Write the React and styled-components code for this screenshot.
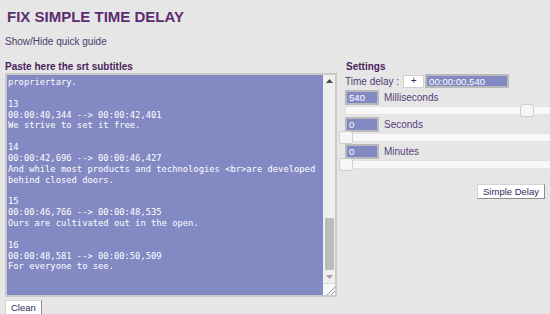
import React, { useState } from 'react';
import styled, { createGlobalStyle } from 'styled-components';

const GlobalStyle = createGlobalStyle`
  html, body {
    margin: 0;
    padding: 0;
  }
  body {
    background: #e6e6e6;
    font-family: "Liberation Sans", Arial, sans-serif;
    overflow: hidden;
  }
`;

const Page = styled.div`
  width: 550px;
  height: 314px;
  overflow: hidden;
  padding: 8px 0 0 5px;
  box-sizing: border-box;
`;

const Title = styled.h1`
  margin: 0 0 0 2px;
  font-size: 15px;
  line-height: 17px;
  font-weight: bold;
  color: #5c2d71;
`;

const GuideLink = styled.a`
  display: block;
  margin-top: 11px;
  font-size: 10px;
  line-height: 12px;
  color: #4d3a6b;
  text-decoration: none;
  cursor: pointer;
`;

const Columns = styled.div`
  display: flex;
  gap: 8px;
  margin-top: 13px;
`;

const LeftCol = styled.div`
  width: 332px;
  flex-shrink: 0;
`;

const RightCol = styled.div`
  width: 205px;
  flex-shrink: 0;
`;

const SectionLabel = styled.div`
  font-size: 10px;
  line-height: 12px;
  font-weight: bold;
  color: #4b1f5e;
  padding-left: ${({ $indent }) => $indent || 0}px;
`;

const Frame = styled.div`
  display: flex;
  width: 332px;
  height: 224px;
  box-sizing: border-box;
  border: 2px solid #c9c9c9;
`;

const SrtText = styled.textarea`
  flex: 1;
  margin: 0;
  border: none;
  outline: none;
  resize: none;
  overflow: hidden;
  padding: 2px 0 0 1px;
  background: #8389c3;
  color: #ffffff;
  font-family: "DejaVu Sans Mono", "Liberation Mono", monospace;
  font-size: 8.8px;
  line-height: 10.85px;
  white-space: pre;
`;

const ScrollBar = styled.div`
  width: 12px;
  display: flex;
  flex-direction: column;
  background: #efefef;
`;

const ScrollArrow = styled.div`
  height: 12px;
  display: flex;
  align-items: center;
  justify-content: center;
`;

const ScrollTrack = styled.div`
  flex: 1;
`;

const ScrollThumb = styled.div`
  margin: 131px 1px 0 2px;
  height: 52px;
  background: #bcbcbc;
`;

const ResizeGrip = styled.div`
  height: 12px;
  background: #f7f7f7;
  border-top: 1px solid #dcdcdc;
  box-sizing: border-box;
  display: flex;
  align-items: flex-end;
  justify-content: flex-end;
`;

const Button = styled.button`
  height: ${({ $h }) => $h}px;
  padding: 0 5px;
  margin: 0;
  background: #ffffff;
  border: 1px solid;
  border-color: #d4d4d4 #8c8c8c #8c8c8c #d4d4d4;
  font-family: "Liberation Sans", Arial, sans-serif;
  font-size: 9.5px;
  line-height: 1;
  color: #2f2a5c;
  cursor: pointer;
`;

const PlusButton = styled.button`
  width: 21px;
  height: 13px;
  padding: 0;
  margin: 0 1px 0 4px;
  background: #ffffff;
  border: 1px solid #d0d0d0;
  font-family: "Liberation Sans", Arial, sans-serif;
  font-size: 10px;
  line-height: 1;
  color: #2f2a5c;
`;

const TimeRow = styled.div`
  display: flex;
  align-items: center;
  height: 14px;
  margin-top: 1px;
  font-size: 10px;
  color: #4e3d73;
`;

const Field = styled.input`
  width: ${({ $w }) => $w}px;
  height: ${({ $h }) => $h}px;
  box-sizing: border-box;
  margin: 0;
  padding: 0 2px;
  background: #8389c3;
  color: #ffffff;
  border: 2px solid #b9b9b9;
  font-family: "Liberation Sans", Arial, sans-serif;
  font-size: 9.6px;
  outline: none;
`;

const FieldRow = styled.div`
  display: flex;
  align-items: center;
  height: 14px;
  margin-top: 2px;
`;

const FieldLabel = styled.span`
  margin-left: 5px;
  font-size: 10px;
  color: #55407a;
`;

const Track = styled.div`
  position: relative;
  width: 338px;
  height: 9px;
  margin: 2px 0 1px;
  box-sizing: border-box;
  background: #f8f8f8;
  border: 1px solid #e2e2e2;
  border-radius: 2px;
`;

const Handle = styled.span`
  position: absolute;
  top: -3px;
  width: 14px;
  height: 13px;
  margin-left: -7px;
  box-sizing: border-box;
  background: #f6f6f6;
  border: 1px solid #cdcdcd;
  border-radius: 3px;
`;

const Actions = styled.div`
  display: flex;
  justify-content: flex-end;
  padding-right: 5px;
  margin-top: 15px;
`;

const srt = `propriertary.

13
00:00:40,344 --> 00:00:42,401
We strive to set it free.

14
00:00:42,696 --> 00:00:46,427
And while most products and technologies <br>are developed
behind closed doors.

15
00:00:46,766 --> 00:00:48,535
Ours are cultivated out in the open.

16
00:00:48,581 --> 00:00:50,509
For everyone to see.
`;

const Slider = ({ label, value, max, onChange }) => (
  <>
    <FieldRow>
      <Field $w={34} $h={15} value={value} onChange={(e) => onChange(e.target.value)} />
      <FieldLabel>{label}</FieldLabel>
    </FieldRow>
    <Track>
      <Handle style={{ left: `${(Number(value) / max) * 100}%` }} />
    </Track>
  </>
);

const pad = (n, l = 2) => String(n).padStart(l, '0');

const App = () => {
  const [ms, setMs] = useState('540');
  const [sec, setSec] = useState('0');
  const [min, setMin] = useState('0');

  const delay = `00:${pad(min)}:${pad(sec)},${pad(ms, 3)}`;

  return (
    <Page>
      <GlobalStyle />
      <Title>FIX SIMPLE TIME DELAY</Title>
      <GuideLink>Show/Hide quick guide</GuideLink>
      <Columns>
        <LeftCol>
          <SectionLabel>Paste here the srt subtitles</SectionLabel>
          <Frame>
            <SrtText defaultValue={srt} spellCheck={false} />
            <ScrollBar>
              <ScrollArrow>
                <svg width="7" height="4" viewBox="0 0 7 4">
                  <path d="M0 4 L3.5 0 L7 4 Z" fill="#4a4a4a" />
                </svg>
              </ScrollArrow>
              <ScrollTrack>
                <ScrollThumb />
              </ScrollTrack>
              <ScrollArrow>
                <svg width="7" height="4" viewBox="0 0 7 4">
                  <path d="M0 0 L7 0 L3.5 4 Z" fill="#a39cac" />
                </svg>
              </ScrollArrow>
              <ResizeGrip>
                <svg width="9" height="9" viewBox="0 0 9 9">
                  <path d="M1 9 L9 1 M5 9 L9 5" stroke="#9a9a9a" strokeWidth="1" />
                </svg>
              </ResizeGrip>
            </ScrollBar>
          </Frame>
          <Button $h={16}>Clean</Button>
        </LeftCol>
        <RightCol>
          <SectionLabel $indent={1}>Settings</SectionLabel>
          <TimeRow>
            Time delay :
            <PlusButton>+</PlusButton>
            <Field $w={84} $h={14} value={delay} readOnly />
          </TimeRow>
          <Slider label="Milliseconds" value={ms} max={1000} onChange={setMs} />
          <Slider label="Seconds" value={sec} max={60} onChange={setSec} />
          <Slider label="Minutes" value={min} max={60} onChange={setMin} />
          <Actions>
            <Button $h={15}>Simple Delay</Button>
          </Actions>
        </RightCol>
      </Columns>
    </Page>
  );
};

export default App;
